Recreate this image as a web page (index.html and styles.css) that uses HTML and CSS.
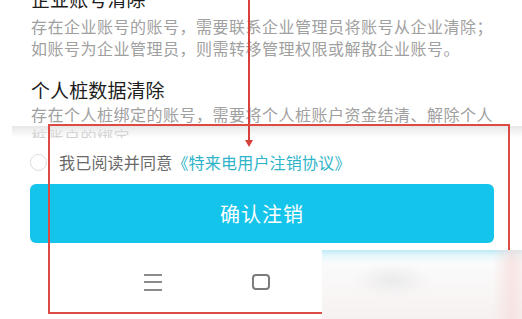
FILE: index.html
```html
<!DOCTYPE html>
<html lang="zh-CN">
<head>
<meta charset="utf-8">
<link rel="stylesheet" href="styles.css">
</head>
<body>
<div class="page">
  <main class="content">
    <h2 class="title">企业账号清除</h2>
    <p class="desc first">存在企业账号的账号，需要联系企业管理员将账号从企业清除；如账号为企业管理员，则需转移管理权限或解散企业账号。</p>
    <h2 class="title second">个人桩数据清除</h2>
    <p class="desc">存在个人桩绑定的账号，需要将个人桩账户资金结清、解除个人桩账户的绑定</p>
  </main>

  <footer class="footer">
    <div class="shade"></div>
    <label class="agree">
      <span class="radio"></span>
      <span class="agree-text">我已阅读并同意<a class="link">《特来电用户注销协议》</a></span>
    </label>
    <button class="confirm">确认注销</button>
    <nav class="navbar">
      <span class="nav-slot"><span class="menu-icon"><i></i><i></i><i></i></span></span>
      <span class="nav-slot"><span class="home-icon"></span></span>
      <span class="nav-slot"><span class="back-icon"></span></span>
    </nav>
  </footer>

  <div class="mark-line"><span class="mark-arrow"></span></div>
  <div class="mark-box"></div>
  <div class="blur-patch"></div>
</div>
</body>
</html>
```

FILE: styles.css
```css
html, body {
  margin: 0;
  padding: 0;
  background: #fff;
}

.page {
  position: relative;
  width: 522px;
  height: 319px;
  overflow: hidden;
  font-family: "Noto Sans CJK SC", "Noto Sans", sans-serif;
  background: #fff;
}

.content {
  width: 465px;
  padding: 0 0 0 31px;
  margin-top: -13px;
}

.title {
  margin: 0;
  font-size: 19px;
  line-height: 24px;
  font-weight: 400;
  color: #1c1c1c;
  letter-spacing: 0.1px;
}

.title.second {
  margin-top: 19px;
}

.desc {
  margin: 2px 0 0;
  font-size: 16px;
  line-height: 21.5px;
  color: #a0a0a0;
  letter-spacing: 0.5px;
}

.desc.first {
  margin-top: 5px;
}

.footer {
  position: absolute;
  left: 0;
  right: 0;
  bottom: 0;
  height: 193px;
  display: flex;
  flex-direction: column;
  background: linear-gradient(to bottom, rgba(255,255,255,0) 0, rgba(255,255,255,0) 12px, #fff 12px);
}

.shade {
  height: 12px;
  margin: 0 0 0 12px;
  background: linear-gradient(to bottom, rgba(226,226,226,0.85) 0, rgba(240,240,240,0.7) 50%, rgba(255,255,255,0.5) 100%);
}

.agree {
  display: flex;
  align-items: center;
  height: 32px;
  margin-top: 8px;
  padding-left: 30px;
}

.radio {
  width: 15px;
  height: 15px;
  border: 1.5px solid #dcdcdc;
  border-radius: 50%;
  box-sizing: content-box;
}

.agree-text {
  margin-left: 12px;
  font-size: 16px;
  color: #6a6a6a;
  letter-spacing: 0.2px;
}

.link {
  color: #2fb4c9;
}

.confirm {
  margin: 6px 0 0 30px;
  width: 464px;
  height: 59px;
  border: none;
  border-radius: 6px;
  background: #14c4eb;
  color: #fff;
  font-family: "Noto Sans CJK SC", "Noto Sans", sans-serif;
  font-size: 20px;
  letter-spacing: 1px;
  padding: 0;
}

.navbar {
  flex: 1;
  display: flex;
  justify-content: center;
  align-items: center;
  padding-top: 2px;
}

.nav-slot {
  width: 108px;
  display: flex;
  justify-content: center;
}

.menu-icon {
  width: 18px;
  height: 17px;
  display: flex;
  flex-direction: column;
  justify-content: space-between;
}

.menu-icon i {
  display: block;
  height: 2px;
  background: #8c8c8c;
}

.home-icon {
  width: 14px;
  height: 12px;
  border: 2.5px solid #7c7c7c;
  border-radius: 4px;
}

.back-icon {
  width: 0;
  height: 0;
  border-top: 8px solid transparent;
  border-bottom: 8px solid transparent;
  border-right: 14px solid #888;
}

/* red annotations */
.mark-line {
  position: absolute;
  left: 248px;
  top: 0;
  width: 2px;
  height: 142px;
  background: #d8403a;
}

.mark-arrow {
  position: absolute;
  left: -3px;
  top: 140px;
  width: 0;
  height: 0;
  border-left: 4px solid transparent;
  border-right: 4px solid transparent;
  border-top: 7px solid #d8403a;
}

.mark-box {
  position: absolute;
  left: 48px;
  top: 124px;
  width: 458px;
  height: 186px;
  border: 2px solid #dc4a43;
}

.blur-patch {
  position: absolute;
  left: 322px;
  top: 250px;
  width: 200px;
  height: 69px;
  background:
    radial-gradient(ellipse 40px 18px at 70px 30px, rgba(225,225,225,0.55), rgba(255,255,255,0)),
    linear-gradient(to right, rgba(255,255,255,0) 0, rgba(255,255,255,0) 170px, rgba(245,220,218,0.7) 190px, rgba(248,232,230,0.6) 200px),
    linear-gradient(to bottom, #bfeaf7 0, #e8f8fc 6px, #fbfbfb 14px, #f6f1f0 100%);
}
```
